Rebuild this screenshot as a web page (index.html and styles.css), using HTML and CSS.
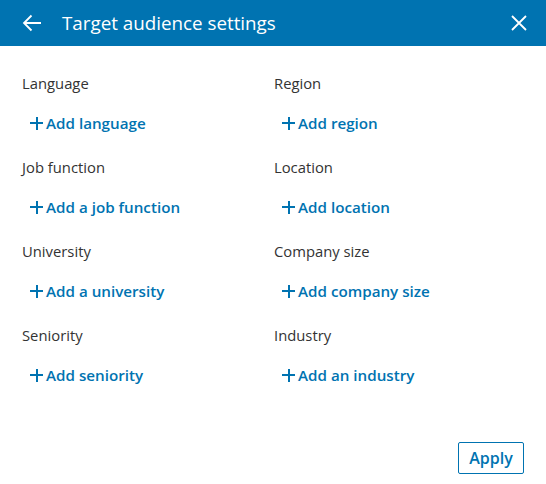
FILE: index.html
```html
<!DOCTYPE html>
<html>
<head>
<meta charset="utf-8">
<link rel="stylesheet" href="styles.css">
</head>
<body>
<div class="dialog">
  <header class="header">
    <button class="icon-btn back" aria-label="Back">
      <svg width="20" height="20" viewBox="0 0 20 20"><path d="M19 10H2.5M9.5 2.5L2 10l7.5 7.5" fill="none" stroke="#fff" stroke-width="1.8"/></svg>
    </button>
    <h1 class="title">Target audience settings</h1>
    <button class="icon-btn close" aria-label="Close">
      <svg width="18" height="18" viewBox="0 0 18 18"><path d="M2 2l14 14M16 2L2 16" fill="none" stroke="#fff" stroke-width="1.8"/></svg>
    </button>
  </header>
  <main class="grid">
    <section class="field"><div class="label">Language</div><a class="add"><span class="plus"></span>Add language</a></section>
    <section class="field"><div class="label">Region</div><a class="add"><span class="plus"></span>Add region</a></section>
    <section class="field"><div class="label">Job function</div><a class="add"><span class="plus"></span>Add a job function</a></section>
    <section class="field"><div class="label">Location</div><a class="add"><span class="plus"></span>Add location</a></section>
    <section class="field"><div class="label">University</div><a class="add"><span class="plus"></span>Add a university</a></section>
    <section class="field"><div class="label">Company size</div><a class="add"><span class="plus"></span>Add company size</a></section>
    <section class="field"><div class="label">Seniority</div><a class="add"><span class="plus"></span>Add seniority</a></section>
    <section class="field"><div class="label">Industry</div><a class="add"><span class="plus"></span>Add an industry</a></section>
  </main>
  <footer class="footer">
    <button class="apply">Apply</button>
  </footer>
</div>
</body>
</html>
```
FILE: styles.css
```css
* { box-sizing: border-box; }
html, body { margin: 0; padding: 0; background: #fff; }
body { font-family: "Open Sans", "Noto Sans", sans-serif; width: 546px; height: 484px; }
.dialog { display: flex; flex-direction: column; height: 484px; }
.header {
  height: 46px;
  background: #0073b1;
  display: flex;
  align-items: center;
  padding: 0 18px 0 22px;
}
.icon-btn {
  background: none; border: 0; padding: 0; display: flex; align-items: center; cursor: pointer;
}
.back { width: 20px; height: 20px; }
.title {
  margin: 0 0 0 20px;
  flex: 1;
  color: #fff;
  font-size: 18.8px;
  font-weight: 400;
}
.close { width: 18px; height: 18px; }
.grid {
  display: grid;
  grid-template-columns: 252px 1fr;
  padding: 27px 22px 0;
}
.field { height: 84px; }
.label {
  color: #333;
  font-size: 14.8px;
  line-height: 20px;
}
.add {
  display: flex;
  align-items: center;
  margin-top: 20px;
  margin-left: 8px;
  color: #0073b1;
  font-size: 15.2px;
  font-weight: 600;
  line-height: 20px;
}
.plus {
  position: relative;
  width: 13px; height: 13px;
  margin-right: 3px;
}
.plus::before, .plus::after {
  content: ""; position: absolute; background: #0073b1;
}
.plus::before { left: 0; top: 5.5px; width: 13px; height: 2px; }
.plus::after { left: 5.5px; top: 0; width: 2px; height: 13px; }
.footer {
  margin-top: auto;
  display: flex;
  justify-content: flex-end;
  padding: 0 22px 10px;
}
.apply {
  width: 66px; height: 32px;
  background: #fff;
  border: 1px solid #0073b1;
  border-radius: 2px;
  color: #0073b1;
  font-family: inherit;
  font-size: 16px;
  font-weight: 600;
  padding: 0;
}
```
